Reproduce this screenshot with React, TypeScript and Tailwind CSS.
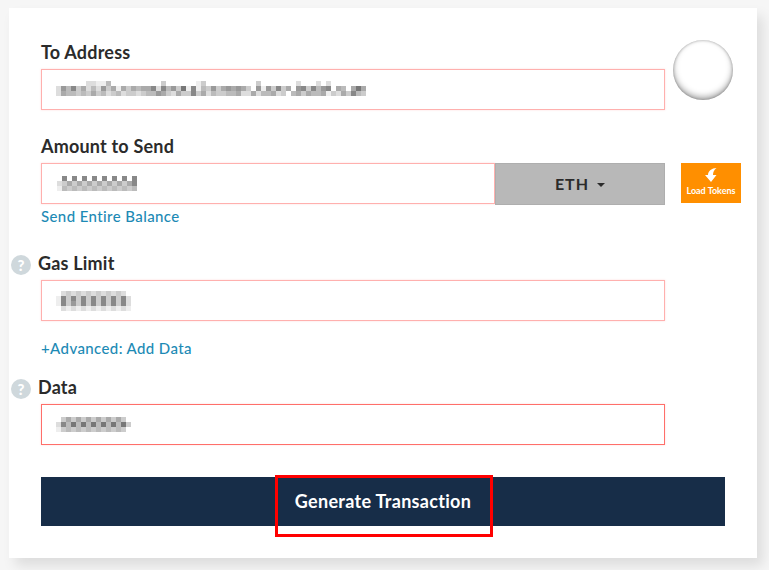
import React from "react";

// pixelated (blurred out) values, one hex digit of grey per cell
const address = [
  "ffffffddeebffffffffffcffffffecffffffffffcfffffffdfffdfdfffffffff".slice(0, 62),
  "d9b8cadbd9caeacabaa8d8b9c7e8ebc9ca9a9acf9e9c8caf98c8b98fabfa7acd".slice(0, 62),
  "dabbcbcacbdcbdccdcbb9acdacc8cadbccbbaddadbbadcfbacabbaecdac8bcbc".slice(0, 62),
];
const amount = ["f8f8f8f8f8f8f8f8", "dcacacacacacaca8", "ebcbcbcbcbcbcbcb"];
const gas = ["fdcdcdcdcdcdcdf", "e8c8c8c8c8c8c8d", "e8c9c8c8c8c8c8d", "fdedededededede"];
const data = ["fcacacacacacacf", "d8b7b7b7b7b7b7c", "ecbcbcbcbcbcbcf"];

const grey = (d: string) => {
  const v = parseInt(d, 16) * 17;
  return `rgb(${v},${v},${v})`;
};

const Mosaic = ({ rows, cell = 5 }: { rows: string[]; cell?: number }) => (
  <div className="flex flex-col">
    {rows.map((row, r) => (
      <div key={r} className="flex">
        {row.split("").map((d, i) => (
          <span key={i} style={{ width: cell, height: cell, backgroundColor: grey(d) }} />
        ))}
      </div>
    ))}
  </div>
);

const Help = () => (
  <span className="mt-[3px] flex h-5 w-5 items-center justify-center rounded-full bg-[#cfd8dc] text-[15px] font-black leading-none text-white">
    ?
  </span>
);

const Field = ({ border = "border-[#ffb0ae]", children }: { border?: string; children: React.ReactNode }) => (
  <div className={`flex h-[41px] w-[624px] items-center border bg-white pl-[14px] shadow-[0_0_2px_rgba(255,80,80,0.2)] ${border}`}>
    {children}
  </div>
);

export default function App() {
  return (
    <div className="h-[570px] w-[769px] overflow-hidden bg-[#f6f6f6] pl-[9px] pt-2 font-['Lato','Liberation_Sans',sans-serif] text-[#2b2b2b]">
      <div className="relative h-[550px] w-[748px] bg-white pl-8 pt-[33px] shadow-[6px_8px_12px_rgba(0,0,0,0.1)]">
        <label className="block text-[18px] font-bold leading-[22px] tracking-[0.2px]">To Address</label>
        <div className="mt-[6px] flex items-start">
          <Field>
            <div className="mb-[2px]">
              <Mosaic rows={address} />
            </div>
          </Field>
          <div className="-mt-[29px] ml-2 h-[60px] w-[60px] rounded-full bg-white shadow-[inset_0_-3px_6px_rgba(0,0,0,0.35),inset_0_0_3px_rgba(0,0,0,0.3)]" />
        </div>

        <label className="mt-[25px] block text-[18px] font-bold leading-[22px] tracking-[0.2px]">Amount to Send</label>
        <div className="mt-[6px] flex items-start">
          <div className="flex h-[41px] w-[624px]">
            <div className="flex flex-1 items-center border border-[#ffb0ae] bg-white pl-[15px] shadow-[0_0_2px_rgba(255,80,80,0.2)]">
              <Mosaic rows={amount} />
            </div>
            <button className="flex h-[42px] w-[170px] items-center justify-center gap-2 border border-[#aeaeae] bg-[#b8b8b8] text-[16px] font-bold tracking-[1px]">
              ETH
              <span className="mt-[2px] h-0 w-0 border-x-[4px] border-t-[4px] border-x-transparent border-t-[#2b2b2b]" />
            </button>
          </div>
          <button className="ml-4 flex h-10 w-[60px] flex-col items-center bg-[#ff8f00] pt-[5px] text-white">
            <svg width="12" height="14" viewBox="0 0 12 14" fill="currentColor">
              <path d="M11.5 0 C7 0 3 3 3 7 L0 7 L6 14 L11.5 7 L8 7 C8 4 9 2 11.5 0 Z" />
            </svg>
            <span className="mt-[3px] text-[9px] font-bold leading-[12px]">Load Tokens</span>
          </button>
        </div>
        <a className="mt-[2px] block text-[15px] font-medium leading-[20px] tracking-[0.4px] text-[#1d8ab5]">Send Entire Balance</a>

        <div className="-ml-[30px] mt-[26px] flex items-start gap-[7px]">
          <Help />
          <label className="text-[18px] font-bold leading-[22px] tracking-[0.2px]">Gas Limit</label>
        </div>
        <div className="mt-[5px]">
          <Field>
            <Mosaic rows={gas} />
          </Field>
        </div>
        <a className="mt-[17px] block text-[15px] font-medium leading-[20px] tracking-[0.4px] text-[#1d8ab5]">+Advanced: Add Data</a>

        <div className="-ml-[30px] mt-[18px] flex items-start gap-[7px]">
          <Help />
          <label className="text-[18px] font-bold leading-[22px] tracking-[0.2px]">Data</label>
        </div>
        <div className="mt-[5px]">
          <Field border="border-[#ff6f6a]">
            <Mosaic rows={data} />
          </Field>
        </div>

        <button className="mt-8 flex h-[49px] w-[684px] items-center justify-center bg-[#172d48] text-[18px] font-bold tracking-[0.3px] text-white">
          Generate Transaction
        </button>
        <div className="absolute left-[266px] top-[467px] h-[62px] w-[218px] border-[3px] border-[#ff0000]" />
      </div>
    </div>
  );
}
